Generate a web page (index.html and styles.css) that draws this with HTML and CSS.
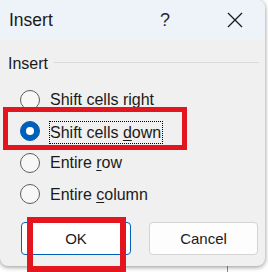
FILE: index.html
```html
<!DOCTYPE html>
<html>
<head>
<meta charset="utf-8">
<link rel="stylesheet" href="styles.css">
</head>
<body>
<div class="dialog">
  <div class="titlebar">
    <span class="title">Insert</span>
    <span class="help">?</span>
    <svg class="close" width="16" height="16" viewBox="0 0 16 16"><path d="M1 1L15 15M15 1L1 15" stroke="#1b1b1b" stroke-width="1.3" fill="none"/></svg>
  </div>
  <div class="content">
    <div class="group-label"><span>Insert</span><span class="rule"></span></div>
    <div class="options">
      <div class="option"><span class="radio"></span><span class="text">Shift cells r<u>i</u>ght</span></div>
      <div class="option"><span class="radio checked"></span><span class="text focused">Shift cells <u>d</u>own</span></div>
      <div class="option"><span class="radio"></span><span class="text">Entire <u>r</u>ow</span></div>
      <div class="option"><span class="radio"></span><span class="text">Entire <u>c</u>olumn</span></div>
    </div>
    <div class="buttons">
      <div class="btn primary">OK</div>
      <div class="btn">Cancel</div>
    </div>
  </div>
  <div class="mark mark-option"></div>
  <div class="mark mark-ok"></div>
</div>
</body>
</html>
```

FILE: styles.css
```css
html, body {
  margin: 0;
  padding: 0;
}
body {
  width: 268px;
  height: 272px;
  overflow: hidden;
  background-color: #ffffff;
  background-image: linear-gradient(#8a8a8a, #8a8a8a), linear-gradient(#8a8a8a, #8a8a8a);
  background-size: 1px 100%, 1px 100%;
  background-position: 45px 0, 227px 0;
  background-repeat: no-repeat;
  font-family: "Liberation Sans", Arial, sans-serif;
  color: #1a1a1a;
}
.dialog {
  position: relative;
  width: 265px;
  height: 266px;
  background: #f0f0f0;
  border-radius: 0 8px 8px 8px;
  box-shadow: 0 1px 5px rgba(0, 0, 0, 0.45);
}
.titlebar {
  height: 40px;
  background: #eef3f9;
  display: flex;
  align-items: center;
  border-radius: 0 8px 0 0;
}
.title {
  font-size: 17.5px;
  margin-left: 9px;
  width: 151px;
}
.help {
  font-size: 18px;
  color: #2a2a2a;
  width: 67px;
}
.close {
  display: block;
}
.content {
  padding-top: 14px;
}
.group-label {
  display: flex;
  align-items: center;
  height: 20px;
  padding-left: 8px;
  font-size: 16px;
}
.rule {
  flex: none;
  width: 205px;
  height: 1px;
  background: #d9d9d9;
  margin-left: 6px;
  margin-top: -4px;
}
.options {
  margin-top: 10px;
}
.option {
  height: 31.5px;
  display: flex;
  align-items: center;
  padding-left: 20px;
  font-size: 16px;
}
.radio {
  box-sizing: border-box;
  width: 20px;
  height: 20px;
  border-radius: 50%;
  border: 1px solid #5e5e5e;
  background: #f7f7f7;
  margin-right: 9px;
  display: flex;
  align-items: center;
  justify-content: center;
}
.radio.checked {
  border-color: #005fb8;
  background: #005fb8;
}
.radio.checked::after {
  content: "";
  width: 8px;
  height: 8px;
  border-radius: 50%;
  background: #ffffff;
}
.text {
  line-height: 21px;
  border: 1px dotted transparent;
  padding-right: 1px;
}
.text.focused {
  border-color: #000000;
  margin-top: 2px;
}
.text u {
  text-underline-offset: 2px;
}
.buttons {
  display: flex;
  gap: 18px;
  padding-left: 21px;
  margin-top: 12px;
}
.btn {
  box-sizing: border-box;
  height: 33px;
  width: 109px;
  background: #fdfdfd;
  border: 1px solid #d3d3d3;
  border-radius: 4px;
  display: flex;
  align-items: center;
  justify-content: center;
  font-size: 15px;
}
.btn.primary {
  width: 110px;
  border-color: #005fb8;
  background: #ffffff;
}
.mark {
  position: absolute;
  box-sizing: border-box;
  border-style: solid;
  border-color: #e3161f;
}
.mark-option {
  left: 3px;
  top: 107px;
  width: 184px;
  height: 43px;
  border-width: 5px;
}
.mark-ok {
  left: 27px;
  top: 217px;
  width: 99px;
  height: 55px;
  border-width: 6px;
}
```
